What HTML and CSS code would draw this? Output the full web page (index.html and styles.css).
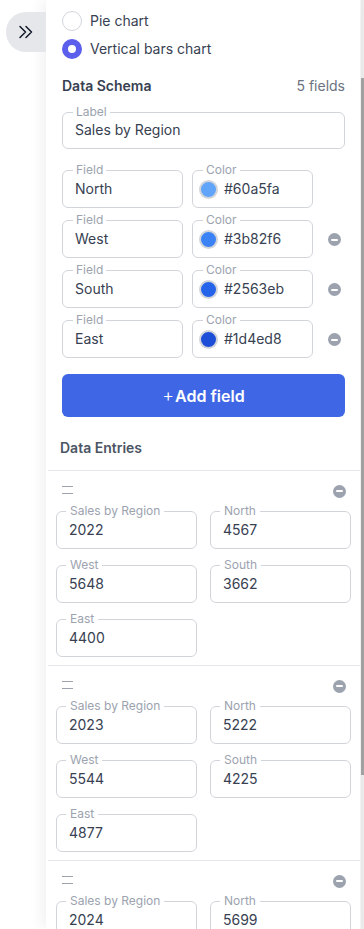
FILE: index.html
```html
<!DOCTYPE html>
<html lang="en">
<head>
<meta charset="utf-8">
<title>Chart editor</title>
<link rel="stylesheet" href="styles.css">
</head>
<body>
<div class="app">
  <div class="gutter">
    <button class="collapse" aria-label="Expand">
      <svg width="16" height="14" viewBox="0 0 16 14"><path d="M2 1.5 L7.5 7 L2 12.5 M8 1.5 L13.5 7 L8 12.5" fill="none" stroke="#111827" stroke-width="1.5" stroke-linecap="round" stroke-linejoin="round"/></svg>
    </button>
  </div>
  <div class="panel">
    <div class="section">
      <label class="radio"><span class="dot"></span>Pie chart</label>
      <label class="radio checked"><span class="dot"></span>Vertical bars chart</label>

      <div class="schema-head"><span class="title">Data Schema</span><span class="count">5 fields</span></div>

      <fieldset class="box label-box"><legend>Label</legend><div class="val">Sales by Region</div></fieldset>

      <div class="field-rows">
        <div class="field-row">
          <fieldset class="box"><legend>Field</legend><div class="val">North</div></fieldset>
          <fieldset class="box color-box"><legend>Color</legend><div class="val"><span class="swatch" style="background:#60a5fa"></span>#60a5fa</div></fieldset>
          <span></span>
        </div>
        <div class="field-row">
          <fieldset class="box"><legend>Field</legend><div class="val">West</div></fieldset>
          <fieldset class="box color-box"><legend>Color</legend><div class="val"><span class="swatch" style="background:#3b82f6"></span>#3b82f6</div></fieldset>
          <span class="minus"></span>
        </div>
        <div class="field-row">
          <fieldset class="box"><legend>Field</legend><div class="val">South</div></fieldset>
          <fieldset class="box color-box"><legend>Color</legend><div class="val"><span class="swatch" style="background:#2563eb"></span>#2563eb</div></fieldset>
          <span class="minus"></span>
        </div>
        <div class="field-row">
          <fieldset class="box"><legend>Field</legend><div class="val">East</div></fieldset>
          <fieldset class="box color-box"><legend>Color</legend><div class="val"><span class="swatch" style="background:#1d4ed8"></span>#1d4ed8</div></fieldset>
          <span class="minus"></span>
        </div>
      </div>

      <button class="add"><span class="plus">+</span>Add field</button>
    </div>

    <div class="entries-title">Data Entries</div>

    <div class="entries">
      <div class="entry">
        <div class="entry-head"><span class="handle"></span><span class="minus"></span></div>
        <div class="entry-grid">
          <fieldset class="box"><legend>Sales by Region</legend><div class="val">2022</div></fieldset>
          <fieldset class="box"><legend>North</legend><div class="val">4567</div></fieldset>
          <fieldset class="box"><legend>West</legend><div class="val">5648</div></fieldset>
          <fieldset class="box"><legend>South</legend><div class="val">3662</div></fieldset>
          <fieldset class="box"><legend>East</legend><div class="val">4400</div></fieldset>
        </div>
      </div>
      <div class="entry">
        <div class="entry-head"><span class="handle"></span><span class="minus"></span></div>
        <div class="entry-grid">
          <fieldset class="box"><legend>Sales by Region</legend><div class="val">2023</div></fieldset>
          <fieldset class="box"><legend>North</legend><div class="val">5222</div></fieldset>
          <fieldset class="box"><legend>West</legend><div class="val">5544</div></fieldset>
          <fieldset class="box"><legend>South</legend><div class="val">4225</div></fieldset>
          <fieldset class="box"><legend>East</legend><div class="val">4877</div></fieldset>
        </div>
      </div>
      <div class="entry">
        <div class="entry-head"><span class="handle"></span><span class="minus"></span></div>
        <div class="entry-grid">
          <fieldset class="box"><legend>Sales by Region</legend><div class="val">2024</div></fieldset>
          <fieldset class="box"><legend>North</legend><div class="val">5699</div></fieldset>
        </div>
      </div>
    </div>
  </div>
  <div class="scrollbar"><div class="thumb"></div></div>
</div>
</body>
</html>
```

FILE: styles.css
```css
* { box-sizing: border-box; }
html, body { margin: 0; padding: 0; }
body {
  font-family: Inter, "Noto Sans", sans-serif;
  font-size: 14px;
  color: #374151;
  background: #ffffff;
  width: 364px;
  height: 929px;
  overflow: hidden;
}
.app {
  display: flex;
  height: 929px;
  overflow: hidden;
}
.gutter {
  width: 46px;
  flex: none;
  padding-top: 12px;
  display: flex;
  flex-direction: column;
  align-items: flex-end;
  background: #ffffff;
}
.collapse {
  width: 40px;
  height: 40px;
  border: none;
  padding: 0;
  margin: 0;
  border-radius: 20px 0 0 20px;
  background: #e5e7eb;
  display: flex;
  align-items: center;
  justify-content: center;
  position: relative;
  z-index: 2;
}
.collapse svg { display: block; }
.panel {
  width: 314px;
  flex: none;
  background: #ffffff;
  box-shadow: -4px 0 14px rgba(0, 0, 0, 0.06);
  position: relative;
  z-index: 1;
  height: 929px;
  overflow: hidden;
}
.section {
  padding: 11px 15px 0 16px;
  display: flex;
  flex-direction: column;
}
.radio {
  display: flex;
  align-items: center;
  height: 20px;
  line-height: 20px;
  gap: 8px;
  color: #374151;
}
.radio + .radio { margin-top: 8px; }
.dot {
  width: 20px;
  height: 20px;
  border-radius: 50%;
  border: 1px solid #d1d5db;
  background: #fff;
  flex: none;
}
.radio.checked .dot {
  border: 6px solid #5b5fec;
}
.schema-head {
  margin-top: 17px;
  height: 20px;
  line-height: 20px;
  display: flex;
  justify-content: space-between;
}
.schema-head .title { font-weight: 600; color: #374151; }
.schema-head .count { color: #6b7280; }

.box {
  margin: 0;
  min-width: 0;
  border: 1px solid #d1d5db;
  border-radius: 6px;
  padding: 0 8px 8px 12px;
}
.box legend {
  font-size: 12px;
  line-height: 14px;
  color: #9ca3af;
  padding: 0 3px;
  margin-left: -2px;
}
.val {
  margin-top: 2px;
  height: 20px;
  line-height: 20px;
  color: #374151;
  white-space: nowrap;
  display: flex;
  align-items: center;
}
.label-box { margin-top: 9px; }
.label-box .val { margin-top: 1px; }

.field-rows {
  margin-top: 14px;
  display: flex;
  flex-direction: column;
  gap: 5px;
}
.field-row {
  display: grid;
  grid-template-columns: 121px 121px auto;
  column-gap: 9px;
  align-items: end;
}
.field-row .minus {
  margin-left: 6px;
  margin-bottom: 12px;
}
.color-box { padding-left: 6px; }
.color-box legend { margin-left: 4px; }
.swatch {
  width: 19px;
  height: 19px;
  border-radius: 50%;
  border: 2.5px solid #d1d5db;
  margin-right: 6px;
  flex: none;
}
.minus {
  width: 13px;
  height: 13px;
  border-radius: 50%;
  background: #9ca3af;
  display: flex;
  align-items: center;
  justify-content: center;
  flex: none;
}
.minus::before {
  content: "";
  width: 7px;
  height: 2px;
  background: #ffffff;
  border-radius: 1px;
}
.add {
  margin-top: 16px;
  height: 43px;
  border: none;
  border-radius: 6px;
  background: #3f67e5;
  color: #ffffff;
  font-family: Inter, "Noto Sans", sans-serif;
  font-size: 16px;
  font-weight: 600;
  display: flex;
  align-items: center;
  justify-content: center;
}
.add .plus {
  font-weight: 300;
  font-size: 18px;
  margin-right: 1px;
}
.entries-title {
  margin-top: 21px;
  padding-left: 14px;
  height: 20px;
  line-height: 20px;
  font-weight: 600;
  color: #4b5563;
}
.entries {
  margin-top: 12px;
  margin-left: 2px;
}
.entry {
  border-top: 1px solid #e5e7eb;
  padding: 10px 9px 8px 8px;
}
.entry-head {
  height: 20px;
  display: flex;
  align-items: center;
  justify-content: space-between;
  padding: 0 5px 0 6px;
  margin-bottom: 3px;
}
.handle {
  width: 11px;
  height: 8px;
  border-top: 1.5px solid #9ca3af;
  border-bottom: 1.5px solid #9ca3af;
  margin-top: -2px;
}
.entry-grid {
  display: grid;
  grid-template-columns: 141px 141px;
  column-gap: 13px;
  row-gap: 9px;
}
.entry-grid .box { padding-left: 12px; }
.entry-grid .box legend { margin-left: -3px; padding: 0 4px; }
.scrollbar {
  width: 4px;
  flex: none;
  background: #ececec;
  height: 929px;
  border-left: 1px solid #f6f6f6;
}
.thumb {
  margin-top: 78px;
  height: 697px;
  background: #a3a3a3;
}
```
